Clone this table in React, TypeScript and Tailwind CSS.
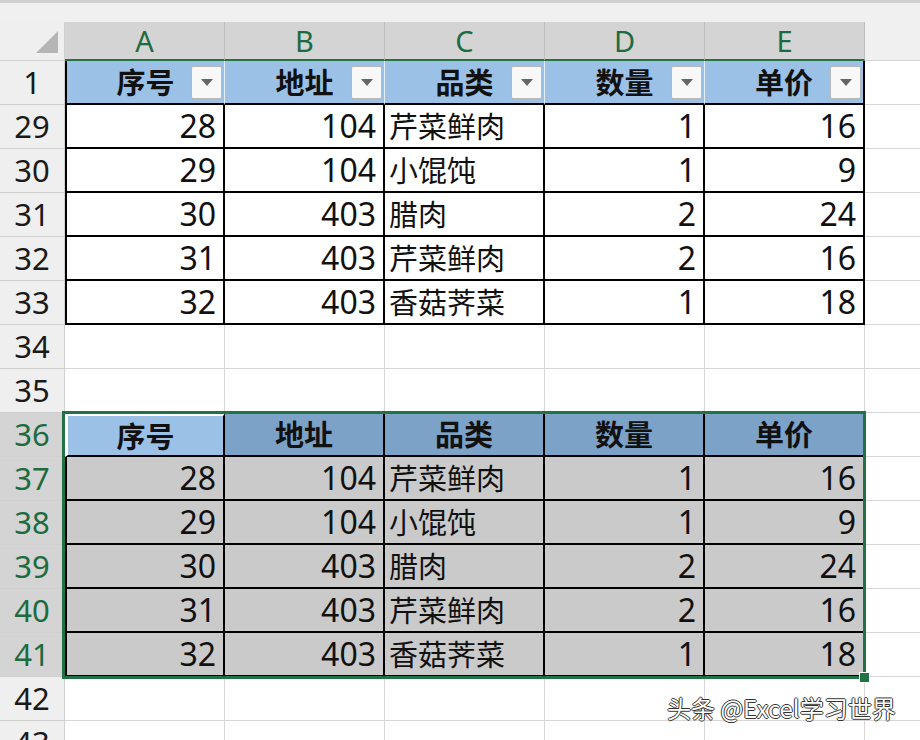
import React from "react";

const FONT = "font-['Noto_Sans','Noto_Sans_CJK_SC',sans-serif]";
const CJK = "font-['Noto_Sans_CJK_SC','Noto_Sans',sans-serif]";

type Row = [number, number, string, number, number];
const data: Row[] = [
  [28, 104, "芹菜鲜肉", 1, 16],
  [29, 104, "小馄饨", 1, 9],
  [30, 403, "腊肉", 2, 24],
  [31, 403, "芹菜鲜肉", 2, 16],
  [32, 403, "香菇荠菜", 1, 18],
];
const heads = ["序号", "地址", "品类", "数量", "单价"];
const cols = ["A", "B", "C", "D", "E"];

function RowHeader({ n, sel }: { n: number; sel?: boolean }) {
  return (
    <div
      className={`w-[65px] h-[44px] shrink-0 flex items-center justify-center border-r border-b border-[#d0d0d0] text-[31px] ${
        sel ? "bg-[#d4d4d4] text-[#1d6b40]" : "bg-[#efefef] text-[#1a1a1a]"
      }`}
    >
      {n}
    </div>
  );
}

function EmptyRow({ n }: { n: number }) {
  return (
    <div className="flex h-[44px]">
      <RowHeader n={n} />
      {cols.map((c) => (
        <div key={c} className="w-[160px] h-[44px] shrink-0 bg-white border-r border-b border-[#d6d6d6]" />
      ))}
      <div className="flex-1 h-[44px] bg-white border-b border-[#d6d6d6]" />
    </div>
  );
}

function Filter() {
  return (
    <div className="absolute right-[2px] top-[5px] w-[31px] h-[33px] bg-[#f8f8f8] border border-[#b8b8b8] rounded-[2px] flex items-center justify-center">
      <svg width="12" height="7" viewBox="0 0 12 7">
        <polygon points="0,0 12,0 6,7" fill="#666" />
      </svg>
    </div>
  );
}

function DataRow({ n, r, sel }: { n: number; r: Row; sel?: boolean }) {
  const bg = sel ? "bg-[#cacaca]" : "bg-white";
  return (
    <div className="flex h-[44px]">
      <RowHeader n={n} sel={sel} />
      {r.map((v, i) => (
        <div
          key={i}
          className={`w-[160px] h-[44px] shrink-0 ${bg} border-r-2 border-b-2 border-black flex items-center ${
            i === 0 ? "border-l-2" : ""
          } ${
            typeof v === "number"
              ? "justify-end pr-[7px] text-[32px]"
              : `justify-start pl-[4px] text-[29px] ${CJK}`
          } text-[#111]`}
        >
          {v}
        </div>
      ))}
      <div className="flex-1 h-[44px] bg-white border-b border-[#d6d6d6]" />
    </div>
  );
}

export default function App() {
  return (
    <div className={`relative w-[920px] h-[740px] overflow-hidden bg-white ${FONT}`}>
      <div className="h-[3px] bg-[#d0d0d0]" />
      <div className="h-[19px] bg-[#f0f0f0]" />
      {/* column headers */}
      <div className="flex h-[39px]">
        <div className="relative w-[65px] shrink-0 bg-[#efefef] border-r border-b border-[#d0d0d0]">
          <svg className="absolute right-[6px] bottom-[7px]" width="22" height="22" viewBox="0 0 22 22">
            <polygon points="22,0 22,22 0,22" fill="#b5b5b5" />
          </svg>
        </div>
        {cols.map((c) => (
          <div
            key={c}
            className="w-[160px] shrink-0 bg-[#d4d4d4] border-r border-[#bdbdbd] border-b-2 border-b-[#217346] flex items-center justify-center text-[29px] text-[#1d6b40]"
          >
            {c}
          </div>
        ))}
        <div className="flex-1 bg-[#f0f0f0] border-b border-[#d6d6d6]" />
      </div>

      {/* row 1: table 1 header */}
      <div className="flex h-[44px]">
        <RowHeader n={1} />
        {heads.map((h, i) => (
          <div
            key={h}
            className={`relative w-[160px] h-[44px] shrink-0 bg-[#9bc2e6] border-b-2 border-b-black flex items-center justify-center text-[29px] font-bold text-[#111] ${CJK} ${
              i === 4 ? "border-r-2 border-r-black" : "border-r border-r-[#e6eef6]"
            } ${i === 0 ? "border-l-2 border-l-black" : ""}`}
          >
            {h}
            <Filter />
          </div>
        ))}
        <div className="flex-1 h-[44px] bg-white border-b border-[#d6d6d6]" />
      </div>

      {data.map((r, i) => (
        <DataRow key={i} n={29 + i} r={r} />
      ))}
      <EmptyRow n={34} />
      <EmptyRow n={35} />

      {/* row 36: table 2 header */}
      <div className="flex h-[44px]">
        <RowHeader n={36} sel />
        {heads.map((h, i) => (
          <div
            key={h}
            className={`w-[160px] h-[44px] shrink-0 border-r-2 border-b-2 border-black flex items-center justify-center text-[29px] font-bold text-[#111] ${CJK} ${
              i === 0 ? "bg-[#9bc2e6] border-t-[3px] border-t-white border-l-[3px] border-l-white" : "bg-[#7ca2c7]"
            }`}
          >
            {h}
          </div>
        ))}
        <div className="flex-1 h-[44px] bg-white border-b border-[#d6d6d6]" />
      </div>

      {data.map((r, i) => (
        <DataRow key={i} n={37 + i} r={r} sel />
      ))}
      <EmptyRow n={42} />
      <EmptyRow n={43} />

      {/* selection outline */}
      <div className="absolute left-[62px] top-[411px] w-[804px] h-[268px] border-[3px] border-[#217346]" />
      <div className="absolute left-[859px] top-[672px] w-[11px] h-[11px] bg-[#217346] border border-white" />

      {/* watermark */}
      <div
        className={`absolute left-[667px] top-[690px] text-[24px] text-white whitespace-nowrap ${CJK} [text-shadow:1px_0_0_#333,-1px_0_0_#333,0_1px_0_#333,0_-1px_0_#333]`}
      >
        头条 @Excel学习世界
      </div>
    </div>
  );
}
